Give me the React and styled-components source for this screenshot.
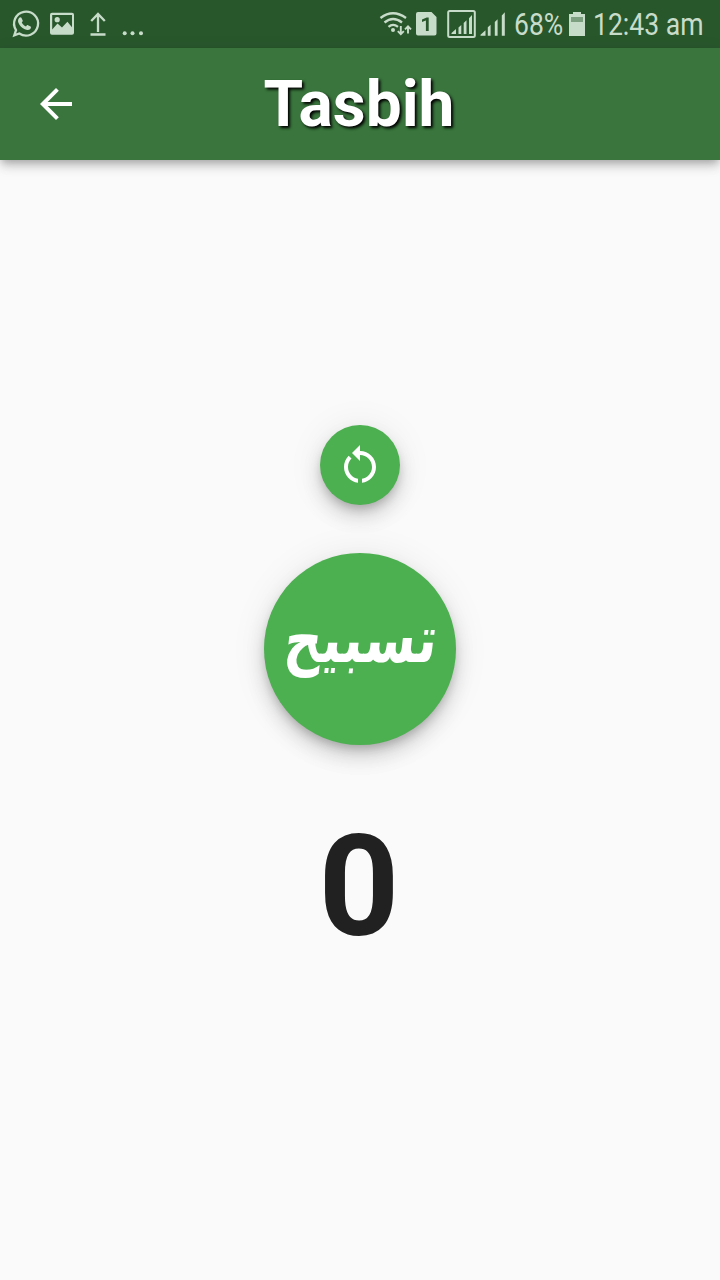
import React, { useState } from "react";
import styled, { createGlobalStyle } from "styled-components";

const GlobalStyle = createGlobalStyle`
  * { box-sizing: border-box; }
  body { margin: 0; background: #fafafa; font-family: Roboto, "Liberation Sans", sans-serif; }
`;

const Screen = styled.div`
  display: flex;
  flex-direction: column;
  height: 1280px;
  background: #fafafa;
  overflow: hidden;
`;

const StatusBar = styled.div`
  display: flex;
  justify-content: space-between;
  height: 48px;
  flex: none;
  background: #29572c;
  color: #c8dcca;
`;

const StatusIcon = styled.svg`
  display: block;
  height: 48px;
  width: ${(p) => p.$width}px;
  fill: currentColor;
`;

const StatusGroup = styled.div`
  display: flex;
  align-items: flex-start;
`;

const StatusText = styled.span`
  display: block;
  width: ${(p) => p.$width}px;
  margin-left: ${(p) => p.$gap || 0}px;
  font-size: 31px;
  line-height: 50px;
  white-space: nowrap;
  transform: scaleX(${(p) => p.$squeeze});
  transform-origin: left;
`;

const AppBar = styled.header`
  display: grid;
  grid-template-columns: 112px 1fr 112px;
  align-items: center;
  height: 112px;
  flex: none;
  background: #39753c;
  color: #fff;
  box-shadow: 0 4px 8px -2px rgba(0, 0, 0, 0.26), 0 8px 10px rgba(0, 0, 0, 0.1), 0 2px 18px rgba(0, 0, 0, 0.06);
`;

const IconButton = styled.button`
  display: flex;
  align-items: center;
  justify-content: center;
  width: 112px;
  height: 112px;
  padding: 0;
  border: 0;
  background: none;
  color: inherit;
`;

const Icon = styled.svg`
  display: block;
  width: 48px;
  height: 48px;
  fill: currentColor;
`;

const Title = styled.h1`
  margin: 0;
  padding: 2px 2px 0 0;
  text-align: center;
  font-size: 64px;
  line-height: 110px;
  font-weight: 700;
  text-shadow: 2px 2px 3px #000;
`;

const Main = styled.main`
  display: flex;
  flex-direction: column;
  align-items: center;
  padding-top: 265px;
`;

const RoundButton = styled.button`
  display: flex;
  align-items: center;
  justify-content: center;
  width: ${(p) => p.$size}px;
  height: ${(p) => p.$size}px;
  padding: 0;
  border: 0;
  border-radius: 50%;
  background: #4caf50;
  color: #fff;
  box-shadow: 0 6px 10px -2px rgba(0, 0, 0, 0.2), 0 12px 20px rgba(0, 0, 0, 0.14), 0 2px 36px rgba(0, 0, 0, 0.08);
`;

const TasbihButton = styled(RoundButton)`
  margin-top: 48px;
`;

const ArabicLabel = styled.span`
  display: block;
  padding-bottom: 16px;
  font-family: "DejaVu Sans", sans-serif;
  font-size: 52px;
  font-weight: 700;
  line-height: 1;
  transform: scaleY(1.26) skewX(-8deg);
`;

const Counter = styled.div`
  margin-top: 60px;
  padding-right: 2px;
  font-size: 141px;
  line-height: 164px;
  font-weight: 700;
  color: #212121;
`;

function NotificationIcons() {
  return (
    <StatusIcon $width={160} viewBox="0 0 160 48">
      <g transform="translate(-1 -0.7)">
        <path d="M15.3 36 17 30.8A12 12 0 1 1 20.3 34.2Z" fill="none" stroke="currentColor" strokeWidth="2.3" />
        <path d="M20.1 18.6c.7-.9 1.8-1 2.3-.1l1.3 2.6c.2.5 0 1-.9 2 .9 1.8 2.1 3 4.2 4 1-1.2 1.4-1.5 2-1.2l2.6 1.4c.8.5.3 2-.5 2.700-1.500 1.100-3.200 1-5.300 0-3.300-1.500-5.200-3.700-6.400-6.500-.700-1.800-.400-3.600.700-4.900Z" />
      </g>
      <path fillRule="evenodd" d="M52 12.8h20q2 0 2 2v18q0 2-2 2H52q-2 0-2-2v-18q0-2 2-2Zm.2 2.2v14.5l5.300-6 4.500 4 5.400-5.700 4.600 5.500V15Z" />
      <circle cx="57.2" cy="19.7" r="2.6" />
      <path d="M98 32V14M91.2 21 98 14l6.800 7M90.500 34.500h15" fill="none" stroke="currentColor" strokeWidth="2.3" />
      <circle cx="124.7" cy="33.2" r="2" />
      <circle cx="132.5" cy="33.2" r="2" />
      <circle cx="141" cy="33.2" r="2" />
    </StatusIcon>
  );
}

function ConnectionIcons() {
  return (
    <StatusIcon $width={134} viewBox="376 0 134 48">
      <g fill="none" stroke="currentColor" strokeWidth="2.3">
        <path d="M380.500 18q12.500-9.500 25.500 0M384.500 22.500q8.500-7 17.500 0M388.500 26.800q4.500-3.800 9.500 0" />
        <path d="M400.800 26v8M397.800 31.200l3 3 3-3M408 33.500v-7M405 29.300l3-3 3 3" strokeWidth="1.9" />
        <rect x="448.200" y="11" width="26.600" height="26" rx="1.500" strokeWidth="2" />
      </g>
      <circle cx="393" cy="30" r="2" />
      <path fillRule="evenodd" d="M418 12h13.500l5 5v16.500q0 2-2 2H418q-2 0-2-2V14q0-2 2-2ZM428.700 17.500h-2l-4.700 2v2.400l3.900-1.300V31h2.800Z" />
      <path d="M451.500 34v-1l4.500-4V34ZM458.500 34v-6.500l2.800-2.500V34ZM463.700 34V23l2.800-2.700V34ZM469 34V18.200l3-3.300V34Z" />
      <path d="M480.500 35.800v-1l5-4.500v5.500ZM487.800 35.800v-8.600l2.800-2.500v11.100ZM494.800 35.800V22l2.800-2.800v16.600ZM501.800 35.800V15.500l3-3.200v23.500Z" />
    </StatusIcon>
  );
}

function BatteryIcon() {
  return (
    <StatusIcon $width={26} viewBox="564 0 26 48">
      <path d="M573 12h8v2h4V36h-16V14h4Z" />
      <path d="M571 17h12v5h-12Z" fill="#7c9f80" />
    </StatusIcon>
  );
}

export default function App() {
  const [count, setCount] = useState(0);
  return (
    <Screen>
      <GlobalStyle />
      <StatusBar>
        <NotificationIcons />
        <StatusGroup>
          <ConnectionIcons />
          <StatusText $width={50} $gap={4} $squeeze={0.855}>68%</StatusText>
          <BatteryIcon />
          <StatusText $width={127} $gap={3} $squeeze={0.857}>12:43 am</StatusText>
        </StatusGroup>
      </StatusBar>
      <AppBar>
        <IconButton aria-label="Back">
          <Icon viewBox="0 0 24 24">
            <path d="M20 11H7.830l5.590-5.590L12 4l-8 8 8 8 1.410-1.410L7.830 13H20v-2z" />
          </Icon>
        </IconButton>
        <Title>Tasbih</Title>
      </AppBar>
      <Main>
        <RoundButton $size={80} aria-label="Reset" onClick={() => setCount(0)}>
          <Icon viewBox="0 0 24 24">
            <path d="M12 5V2L8 6l4 4V7c3.310 0 6 2.690 6 6 0 2.970-2.170 5.430-5 5.910v2.020c3.950-.490 7-3.850 7-7.930 0-4.420-3.580-8-8-8zM6 13c0-1.650.670-3.150 1.760-4.240L6.340 7.340A8.014 8.014 0 0 0 4 13c0 4.080 3.050 7.440 7 7.930v-2.020c-2.830-.480-5-2.940-5-5.910z" />
          </Icon>
        </RoundButton>
        <TasbihButton $size={192} onClick={() => setCount((c) => c + 1)}>
          <ArabicLabel lang="ar" dir="rtl">تسبيح</ArabicLabel>
        </TasbihButton>
        <Counter>{count}</Counter>
      </Main>
    </Screen>
  );
}
